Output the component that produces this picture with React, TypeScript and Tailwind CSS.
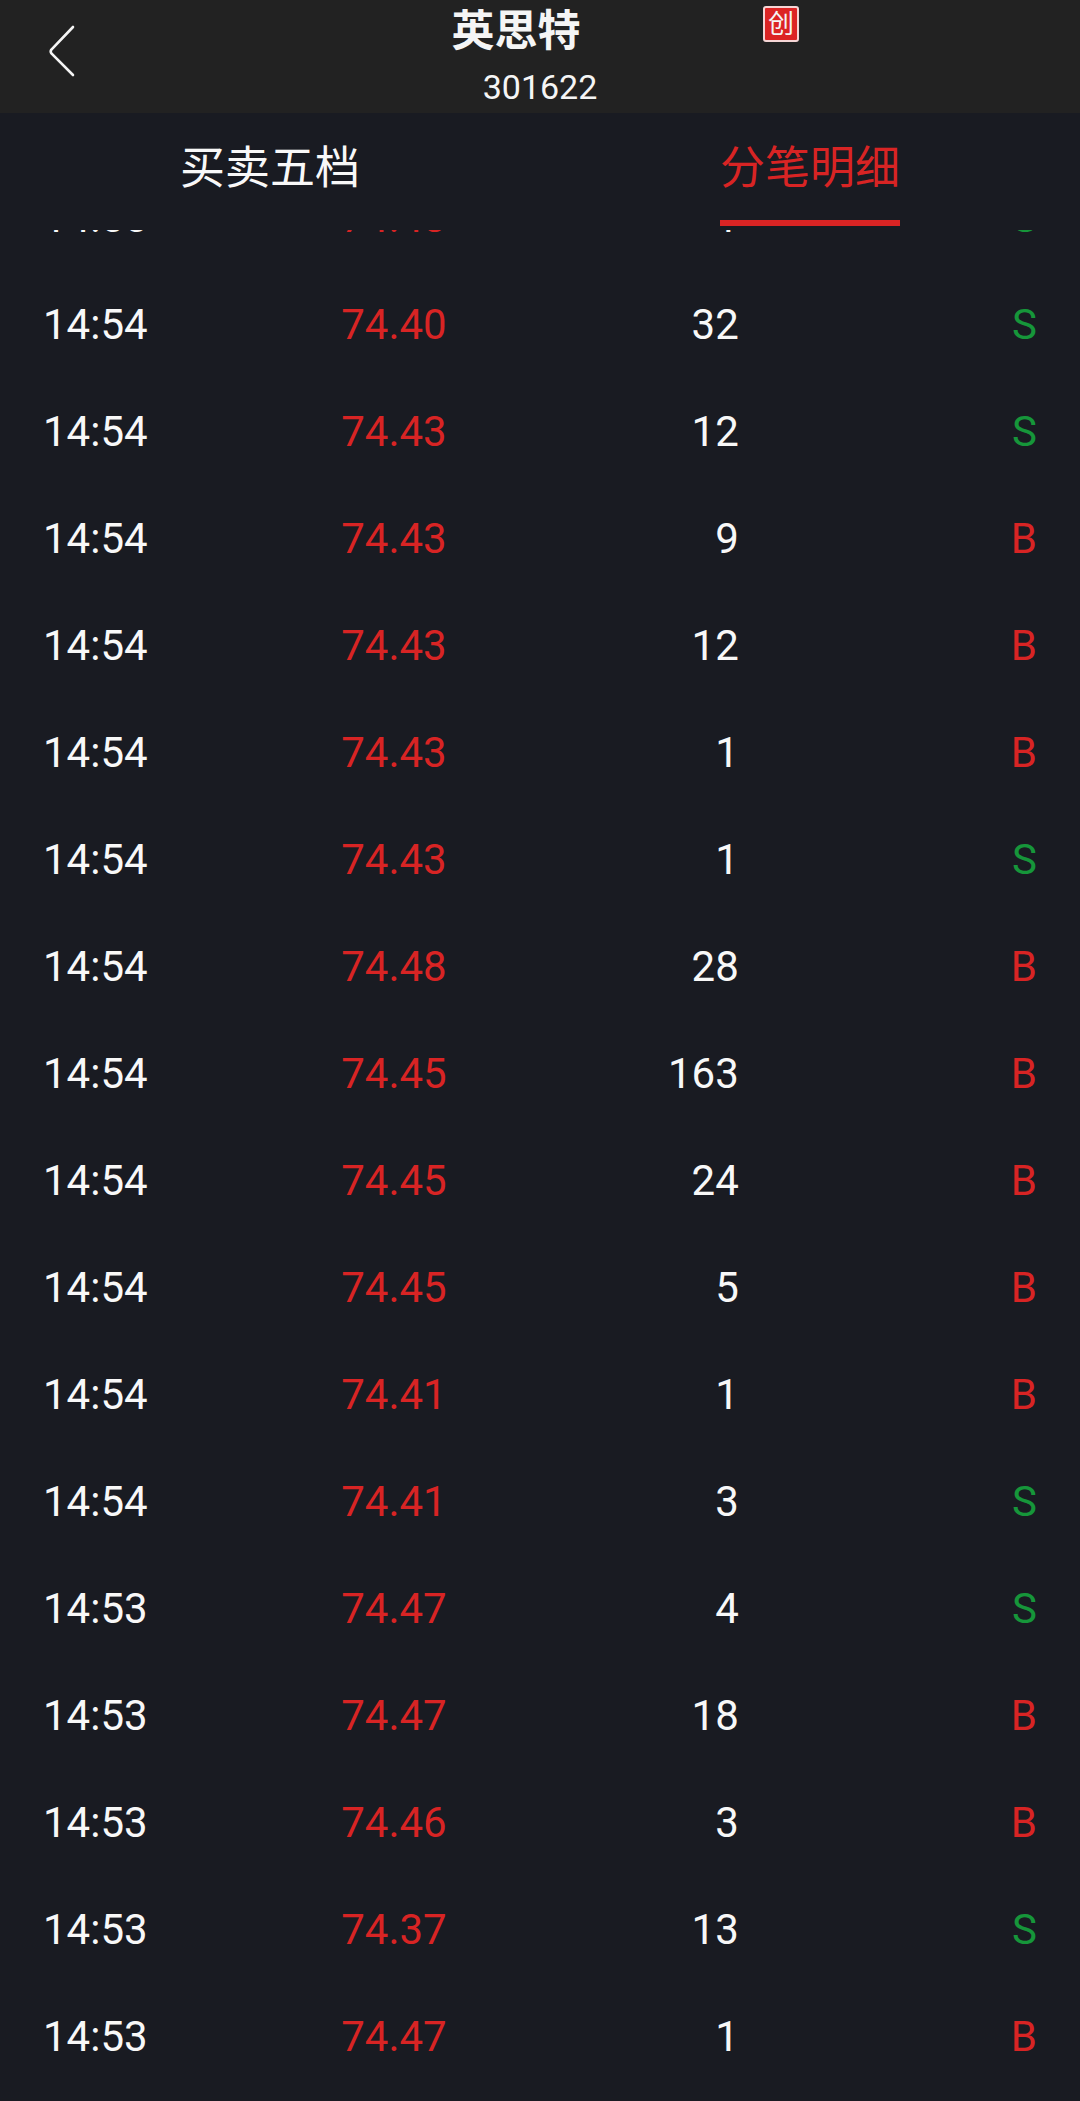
import { useState } from "react";

type Side = "B" | "S";

interface Tick {
  time: string;
  price: string;
  volume: number;
  side: Side;
}

const ticks: Tick[] = [
  { time: "14:55", price: "74.43", volume: 1, side: "S" },
  { time: "14:54", price: "74.40", volume: 32, side: "S" },
  { time: "14:54", price: "74.43", volume: 12, side: "S" },
  { time: "14:54", price: "74.43", volume: 9, side: "B" },
  { time: "14:54", price: "74.43", volume: 12, side: "B" },
  { time: "14:54", price: "74.43", volume: 1, side: "B" },
  { time: "14:54", price: "74.43", volume: 1, side: "S" },
  { time: "14:54", price: "74.48", volume: 28, side: "B" },
  { time: "14:54", price: "74.45", volume: 163, side: "B" },
  { time: "14:54", price: "74.45", volume: 24, side: "B" },
  { time: "14:54", price: "74.45", volume: 5, side: "B" },
  { time: "14:54", price: "74.41", volume: 1, side: "B" },
  { time: "14:54", price: "74.41", volume: 3, side: "S" },
  { time: "14:53", price: "74.47", volume: 4, side: "S" },
  { time: "14:53", price: "74.47", volume: 18, side: "B" },
  { time: "14:53", price: "74.46", volume: 3, side: "B" },
  { time: "14:53", price: "74.37", volume: 13, side: "S" },
  { time: "14:53", price: "74.47", volume: 1, side: "B" },
];

const tabs = ["买卖五档", "分笔明细"];

function Header() {
  return (
    <header className="grid grid-cols-3 bg-[#222222] text-[#f5f5f5]">
      <div className="flex items-center pb-3 pl-10">
        <button type="button" aria-label="返回" className="cursor-pointer">
          <svg width="44" height="60" viewBox="0 0 44 60" fill="none" stroke="currentColor" strokeWidth="2.6" strokeLinecap="round" strokeLinejoin="round">
            <path d="M33 6 L11.4 28.6 Q10 30.5 11.4 32.4 L33 54" />
          </svg>
        </button>
      </div>
      <div className="pt-[2px] text-center">
        <h1 className="pr-12 text-[43px] leading-[59px] font-bold">英思特</h1>
        <p className="text-[34px] leading-[52px]">301622</p>
      </div>
      <div className="pt-[6px] pl-[43px]">
        <span className="flex size-9 items-center justify-center rounded-[3px] border-2 border-[#f5d5d5] bg-[#dc2424] text-[26px] leading-none">
          创
        </span>
      </div>
    </header>
  );
}

export default function App() {
  const [active, setActive] = useState(1);

  return (
    <div className="min-h-screen bg-[#191b22] font-[Roboto,'Noto_Sans_CJK_SC',sans-serif] text-[#f8f8f8]">
      <Header />

      <nav className="grid grid-cols-2 pb-1">
        {tabs.map((label, i) => (
          <div key={label} className="flex justify-center">
            <button
              type="button"
              onClick={() => setActive(i)}
              aria-pressed={active === i}
              className={`cursor-pointer border-b-[6px] pt-1 text-[45px] leading-[103px] ${
                active === i ? "border-[#d92424] text-[#d82424]" : "border-transparent"
              }`}
            >
              {label}
            </button>
          </div>
        ))}
      </nav>

      {/* list is scrolled, so the first row is mostly hidden under the tabs */}
      <main className="overflow-hidden px-[43px]">
        <table className="-mt-[66px] w-full table-fixed text-[42px] leading-[107px]">
          <colgroup>
            <col className="w-[30%]" />
            <col className="w-[20%]" />
            <col className="w-[20%]" />
            <col className="w-[30%]" />
          </colgroup>
          <tbody>
            {ticks.map((t, i) => (
              <tr key={i}>
                <td className="p-0">{t.time}</td>
                <td className="p-0 text-[#d82424]">{t.price}</td>
                <td className="p-0 text-right">{t.volume}</td>
                <td className={`p-0 text-right ${t.side === "B" ? "text-[#d82424]" : "text-[#16963a]"}`}>
                  {t.side}
                </td>
              </tr>
            ))}
          </tbody>
        </table>
      </main>
    </div>
  );
}
